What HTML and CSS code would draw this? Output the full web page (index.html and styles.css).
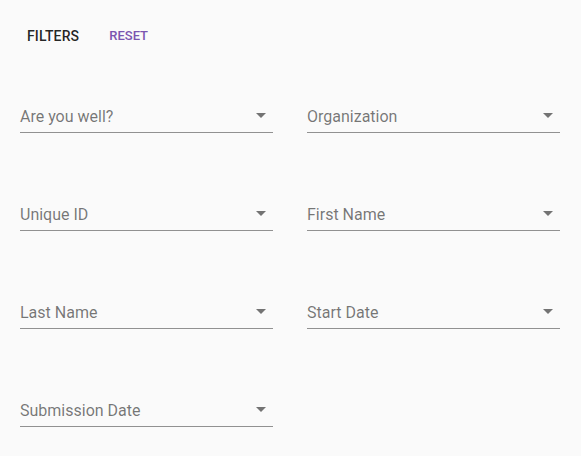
FILE: index.html
```html
<!DOCTYPE html>
<html lang="en">
<head>
<meta charset="utf-8">
<title>Filters</title>
<link rel="stylesheet" href="styles.css">
</head>
<body>
  <div class="panel">
    <div class="toolbar">
      <span class="title">FILTERS</span>
      <button class="reset" type="button">RESET</button>
    </div>
    <div class="fields">
      <div class="field"><div class="select"><span class="label">Are you well?</span><svg class="arrow" viewBox="0 0 24 24"><path d="M7 10l5 5 5-5z"/></svg></div></div>
      <div class="field"><div class="select"><span class="label">Organization</span><svg class="arrow" viewBox="0 0 24 24"><path d="M7 10l5 5 5-5z"/></svg></div></div>
      <div class="field"><div class="select"><span class="label">Unique ID</span><svg class="arrow" viewBox="0 0 24 24"><path d="M7 10l5 5 5-5z"/></svg></div></div>
      <div class="field"><div class="select"><span class="label">First Name</span><svg class="arrow" viewBox="0 0 24 24"><path d="M7 10l5 5 5-5z"/></svg></div></div>
      <div class="field"><div class="select"><span class="label">Last Name</span><svg class="arrow" viewBox="0 0 24 24"><path d="M7 10l5 5 5-5z"/></svg></div></div>
      <div class="field"><div class="select"><span class="label">Start Date</span><svg class="arrow" viewBox="0 0 24 24"><path d="M7 10l5 5 5-5z"/></svg></div></div>
      <div class="field"><div class="select"><span class="label">Submission Date</span><svg class="arrow" viewBox="0 0 24 24"><path d="M7 10l5 5 5-5z"/></svg></div></div>
    </div>
  </div>
</body>
</html>
```

FILE: styles.css
```css
html, body {
  margin: 0;
  padding: 0;
  background: #fafafa;
  font-family: Roboto, "Noto Sans", Arial, sans-serif;
}

.panel {
  width: 581px;
  height: 456px;
  box-sizing: border-box;
  padding: 26px 21px 0 20px;
}

.toolbar {
  display: flex;
  align-items: center;
  height: 20px;
  padding-left: 7px;
}

.title {
  font-size: 14px;
  font-weight: 500;
  line-height: 20px;
  letter-spacing: 0.01em;
  color: rgba(0, 0, 0, 0.87);
}

.reset {
  margin-left: 30px;
  padding: 0;
  border: 0;
  background: none;
  font-family: inherit;
  font-size: 13px;
  font-weight: 500;
  line-height: 20px;
  color: #7b55b0;
  cursor: pointer;
}

.fields {
  margin-top: 39px;
  display: grid;
  grid-template-columns: 1fr 1fr;
  column-gap: 34px;
  row-gap: 50px;
}

.field {
  height: 48px;
  display: flex;
  flex-direction: column;
  justify-content: flex-end;
}

.select {
  position: relative;
  padding-bottom: 6px;
  border-bottom: 1px solid rgba(0, 0, 0, 0.42);
  font-size: 16px;
  line-height: 19px;
  color: rgba(0, 0, 0, 0.54);
}

.label {
  display: block;
}

.arrow {
  position: absolute;
  right: 0;
  top: -4px;
  width: 24px;
  height: 24px;
  fill: rgba(0, 0, 0, 0.54);
}
```
